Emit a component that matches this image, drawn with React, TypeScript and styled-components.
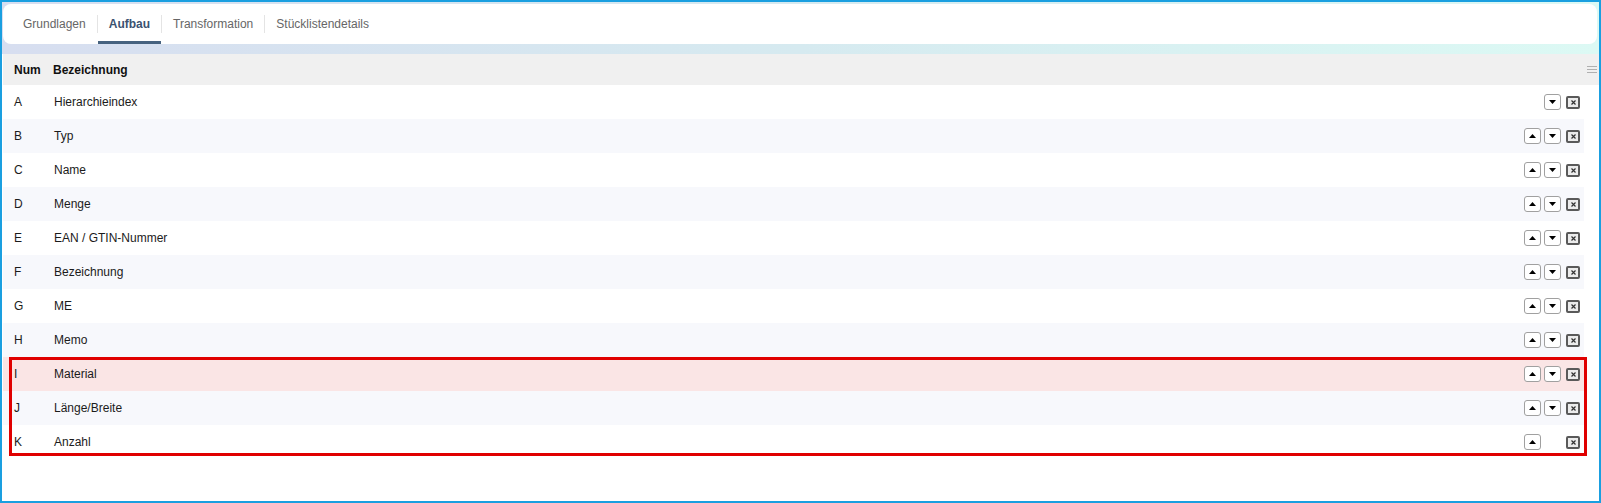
import React from 'react';
import styled, { createGlobalStyle } from 'styled-components';

const Global = createGlobalStyle`
  html, body { margin: 0; padding: 0; background: #fff; }
  * { box-sizing: border-box; }
`

const Frame = styled.div`
  width: 1601px;
  height: 503px;
  border: 2px solid #1a9fe0;
  background: #fff;
  font-family: Arial, "Liberation Sans", sans-serif;
  font-size: 12px;
  color: #1b1b1b;
  display: flex;
  flex-direction: column;
  overflow: hidden;
`

const Top = styled.div`
  background: linear-gradient(90deg, #d7def0 0%, #d6eaf0 50%, #dcf9f4 100%);
  padding: 2px 2px 10px 1px;
`

const TabCard = styled.div`
  height: 40px;
  background: #fff;
  border-radius: 8px;
  display: flex;
  align-items: stretch;
  padding-left: 9px;
`

const Tab = styled.div<{ $active?: boolean }>`
  display: flex;
  align-items: center;
  padding: 3px 11px 0 11px;
  color: ${p => (p.$active ? '#3b5270' : '#666')};
  font-weight: ${p => (p.$active ? 'bold' : 'normal')};
  border-bottom: 3px solid ${p => (p.$active ? '#46627f' : 'transparent')};
  cursor: pointer;
`

const Sep = styled.div`
  width: 1px;
  height: 18px;
  align-self: center;
  background: #e4e4e4;
`

const Table = styled.div`
  margin: 0 0 0 1px;
  flex: 1;
  display: flex;
  flex-direction: column;
`

const HeadRow = styled.div`
  height: 31px;
  background: #f0f0f0;
  display: grid;
  grid-template-columns: 39px 1fr 20px;
  align-items: center;
  padding-left: 11px;
  font-weight: bold;
  color: #111;
`

const Burger = styled.div`
  width: 10px;
  display: flex;
  flex-direction: column;
  gap: 2px;
  justify-self: end;
  margin-right: 2px;
  span { display: block; height: 1px; background: #b0b0b0; }
`

const Body = styled.div`
  padding-right: 15px;
`

const Group = styled.div`
  position: relative;
  &::after {
    content: '';
    position: absolute;
    top: 0;
    left: 6px;
    right: -3px;
    bottom: 3px;
    border: 3px solid #e00000;
    pointer-events: none;
  }
`

const Row = styled.div<{ $bg: string }>`
  height: 34px;
  background: ${p => p.$bg};
  display: grid;
  grid-template-columns: 40px 1fr auto;
  align-items: center;
  padding: 0 4px 0 11px;
`

const Actions = styled.div`
  display: flex;
  align-items: center;
`

const MoveBtn = styled.button<{ $hidden?: boolean }>`
  width: 17px;
  height: 16px;
  padding: 0;
  margin-right: 3px;
  border: 1px solid #a0a0a0;
  border-radius: 3px;
  background: #fff;
  display: flex;
  align-items: center;
  justify-content: center;
  visibility: ${p => (p.$hidden ? 'hidden' : 'visible')};
`

const DelBtn = styled.button`
  width: 14px;
  height: 13px;
  margin-left: 2px;
  padding: 0;
  border: 2px solid #5a5a5a;
  border-radius: 2px;
  background: #ececec;
  display: flex;
  align-items: center;
  justify-content: center;
`

const Up = () => (
  <svg width="7" height="4" viewBox="0 0 7 4"><path d="M0 4 L3.5 0 L7 4 Z" fill="#000" /></svg>
)
const Down = () => (
  <svg width="7" height="4" viewBox="0 0 7 4"><path d="M0 0 L3.5 4 L7 0 Z" fill="#000" /></svg>
)
const Cross = () => (
  <svg width="5" height="5" viewBox="0 0 5 5"><path d="M0.5 0.5 L4.5 4.5 M4.5 0.5 L0.5 4.5" stroke="#333" strokeWidth="1.2" /></svg>
)

const items = [
  ['A', 'Hierarchieindex'],
  ['B', 'Typ'],
  ['C', 'Name'],
  ['D', 'Menge'],
  ['E', 'EAN / GTIN-Nummer'],
  ['F', 'Bezeichnung'],
  ['G', 'ME'],
  ['H', 'Memo'],
  ['I', 'Material'],
  ['J', 'Länge/Breite'],
  ['K', 'Anzahl'],
]

const tabs = ['Grundlagen', 'Aufbau', 'Transformation', 'Stücklistendetails']

export default function App() {
  const renderRow = (idx: number) => {
    const [num, name] = items[idx]
    const bg = idx === 8 ? '#fae5e5' : idx % 2 === 1 ? '#f7f8fc' : '#fff'
    return (
      <Row key={num} $bg={bg}>
        <span>{num}</span>
        <span>{name}</span>
        <Actions>
          <MoveBtn $hidden={idx === 0}><Up /></MoveBtn>
          <MoveBtn $hidden={idx === items.length - 1}><Down /></MoveBtn>
          <DelBtn><Cross /></DelBtn>
        </Actions>
      </Row>
    )
  }
  return (
    <Frame>
      <Global />
      <Top>
        <TabCard>
          {tabs.map((t, i) => (
            <React.Fragment key={t}>
              {i > 0 && <Sep />}
              <Tab $active={t === 'Aufbau'}>{t}</Tab>
            </React.Fragment>
          ))}
        </TabCard>
      </Top>
      <Table>
        <HeadRow>
          <span>Num</span>
          <span>Bezeichnung</span>
          <Burger><span /><span /><span /></Burger>
        </HeadRow>
        <Body>
          {items.slice(0, 8).map((_, i) => renderRow(i))}
          <Group>{[8, 9, 10].map(i => renderRow(i))}</Group>
        </Body>
      </Table>
    </Frame>
  )
}
